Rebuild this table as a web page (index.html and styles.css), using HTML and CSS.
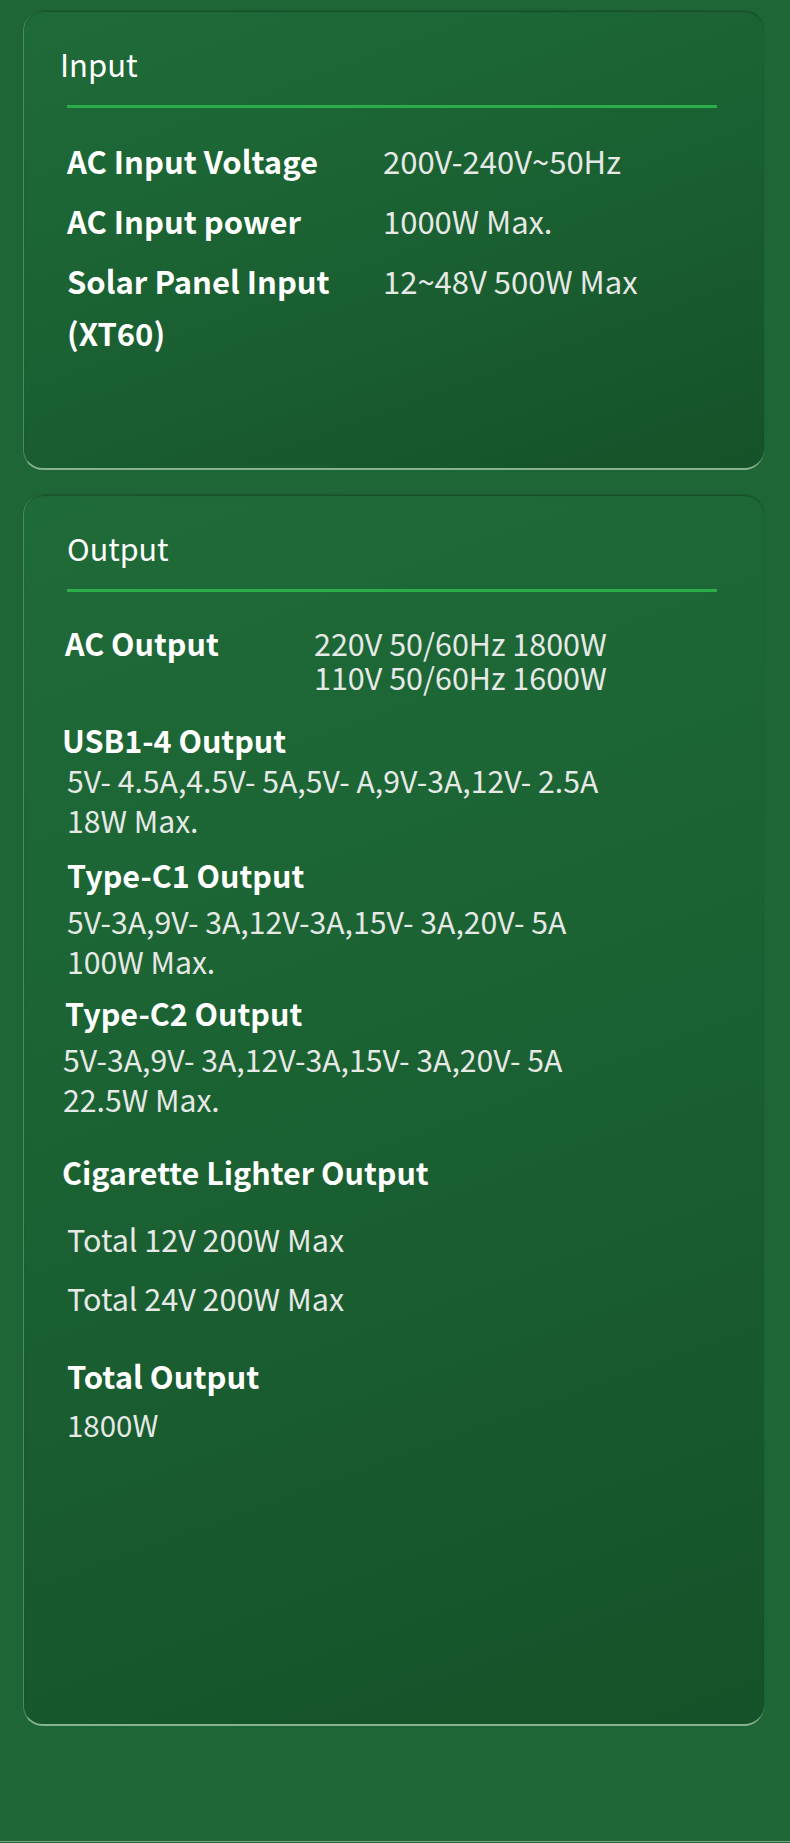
FILE: index.html
```html
<!DOCTYPE html>
<html lang="en">
<head>
<meta charset="utf-8">
<title>Specs</title>
<link rel="stylesheet" href="styles.css">
</head>
<body>
<div class="page">
  <section class="card card-input">
    <h2 class="card-title title-input">Input</h2>
    <div class="rule"></div>
    <div class="spec-grid">
      <div class="label">AC Input Voltage</div>
      <div class="value">200V-240V~50Hz</div>
      <div class="label">AC Input power</div>
      <div class="value">1000W Max.</div>
      <div class="label">Solar Panel Input<br>(XT60)</div>
      <div class="value">12~48V 500W Max</div>
    </div>
  </section>

  <section class="card card-output">
    <h2 class="card-title title-output">Output</h2>
    <div class="rule"></div>

    <div class="ac-row">
      <div class="label">AC Output</div>
      <div class="value ac-values">
        <div>220V 50/60Hz 1800W</div>
        <div>110V 50/60Hz 1600W</div>
      </div>
    </div>

    <div class="block usb">
      <div class="label">USB1-4 Output</div>
      <div class="value detail">5V- 4.5A,4.5V- 5A,5V- A,9V-3A,12V- 2.5A<br>18W Max.</div>
    </div>

    <div class="block c1">
      <div class="label">Type-C1 Output</div>
      <div class="value detail">5V-3A,9V- 3A,12V-3A,15V- 3A,20V- 5A<br>100W Max.</div>
    </div>

    <div class="block c2">
      <div class="label">Type-C2 Output</div>
      <div class="value detail">5V-3A,9V- 3A,12V-3A,15V- 3A,20V- 5A<br>22.5W Max.</div>
    </div>

    <div class="block cig">
      <div class="label">Cigarette Lighter Output</div>
      <div class="value cig-line first">Total 12V 200W Max</div>
      <div class="value cig-line">Total 24V 200W Max</div>
    </div>

    <div class="block total">
      <div class="label">Total Output</div>
      <div class="value total-value">1800W</div>
    </div>
  </section>
</div>
</body>
</html>
```

FILE: styles.css
```css
html, body {
  margin: 0;
  padding: 0;
}
body {
  background: #1e6636;
  font-family: "Noto Sans CJK SC", "Noto Sans", sans-serif;
  color: #ffffff;
}
.page {
  width: 790px;
  height: 1842px;
  border-bottom: 1px solid #7fa98a;
  padding-top: 11px;
  box-sizing: border-box;
}
.card {
  margin-left: 23px;
  width: 741px;
  box-sizing: border-box;
  border-radius: 20px;
  background: linear-gradient(160deg, #1f6b38 0%, #1b6233 45%, #155229 100%);
  box-shadow: inset 0 1px 1px rgba(0,0,0,0.25), 0 -1px 1px rgba(0,0,0,0.12);
  border-bottom: 2px solid #86b291;
  border-left: 1px solid #4f8a5f;
  padding-left: 43px;
  padding-right: 47px;
}
.card-input {
  height: 459px;
  padding-top: 33px;
  font-size: 31px;
}
.card-output {
  margin-top: 25px;
  height: 1231px;
  padding-top: 33px;
  font-size: 30.5px;
}
.card-title {
  margin: 0;
  font-weight: 400;
  font-size: 31px;
  line-height: 40px;
  color: #ffffff;
}
.title-input { margin-left: -7px; }
.title-output { margin-left: 0; font-size: 30.5px; }
.rule {
  height: 3px;
  background: #2bae4a;
  margin-top: 21px;
}
.label {
  font-weight: 700;
  color: #ffffff;
}
.value {
  font-weight: 400;
  color: #e6e9e6;
}
.spec-grid {
  display: grid;
  grid-template-columns: 316px 1fr;
  row-gap: 8px;
  margin-top: 27px;
  line-height: 52px;
}
.ac-row {
  display: grid;
  grid-template-columns: 247px 1fr;
  margin-top: 34px;
  line-height: 34px;
}
.ac-row .label { margin-left: -2px; }
.block { line-height: 40px; }
.detail { font-size: 30.2px; }
.usb { margin-top: 26px; margin-left: -5px; }
.usb .detail { margin-left: 5px; }
.c1 { margin-top: 15px; }
.c1 .label { margin-bottom: 6px; }
.c2 { margin-top: 12px; margin-left: -2px; }
.c2 .label { margin-bottom: 6px; }
.c2 .detail { margin-left: -2px; }
.cig { margin-top: 33px; margin-left: -5px; }
.cig-line { margin-left: 5px; line-height: 59px; }
.cig-line.first { margin-top: 18px; }
.total { margin-top: 24px; }
.total .label { line-height: 48px; font-size: 31px; }
.total-value { margin-top: 4px; font-size: 29.5px; }
```
